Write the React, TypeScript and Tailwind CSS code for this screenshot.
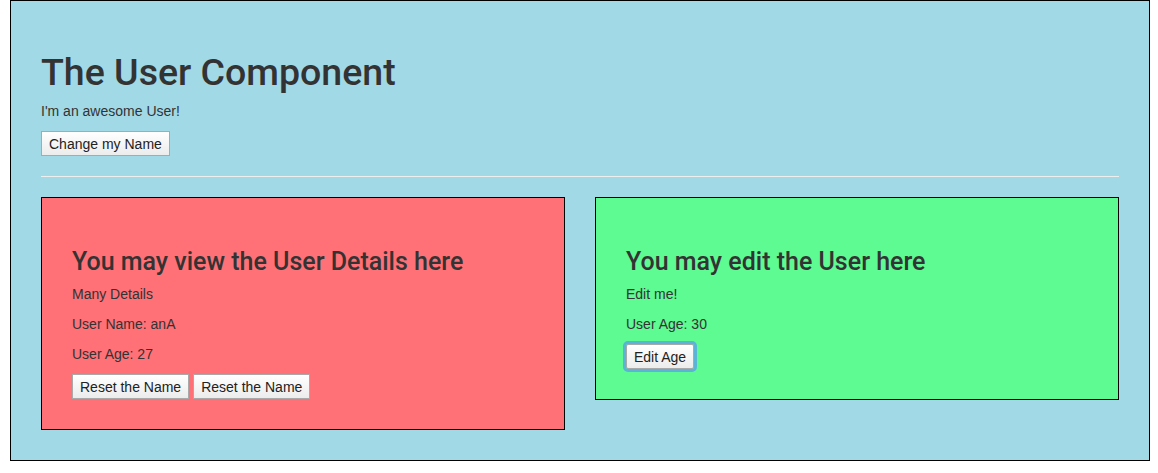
const Btn = ({ label, focused }: { label: string; focused?: boolean }) => (
  <button
    className={
      "h-[25px] px-[7px] text-[14px] leading-none text-[#222] border border-[#a9a9a9] bg-gradient-to-b from-white to-[#ececec] " +
      (focused ? "outline-[3px] outline-solid outline-[#5ab4d8] rounded-[2px]" : "")
    }
  >
    {label}
  </button>
);

const App = () => {
  return (
    <div className="w-[1158px] h-[473px] bg-white font-['Liberation_Sans',Arial,sans-serif] text-[#333] text-[14px] leading-[20px]">
      <div className="ml-[10px] w-[1140px] h-[461px] border border-black bg-[#a1d9e6] p-[30px]">
        <h1 className="mt-[21px] mb-[9px] font-['Roboto',sans-serif] font-medium text-[37.5px] leading-[40px]">
          The User Component
        </h1>
        <p className="mb-[10px]">I'm an awesome User!</p>
        <Btn label="Change my Name" />
        <hr className="my-[20px] border-t border-[#eeeeee]" />
        <div className="flex items-start gap-[30px]">
          <div className="flex-1 border border-black bg-[#ff7177] p-[30px]">
            <h3 className="mt-[21px] mb-[9px] font-['Roboto',sans-serif] font-medium text-[25px] leading-[26px]">
              You may view the User Details here
            </h3>
            <p className="mb-[10px]">Many Details</p>
            <p className="mb-[10px]">User Name: anA</p>
            <p className="mb-[10px]">User Age: 27</p>
            <div className="flex gap-[4px]">
              <Btn label="Reset the Name" />
              <Btn label="Reset the Name" />
            </div>
          </div>
          <div className="flex-1 border border-black bg-[#5efa92] p-[30px]">
            <h3 className="mt-[21px] mb-[9px] font-['Roboto',sans-serif] font-medium text-[25px] leading-[26px]">
              You may edit the User here
            </h3>
            <p className="mb-[10px]">Edit me!</p>
            <p className="mb-[10px]">User Age: 30</p>
            <Btn label="Edit Age" focused />
          </div>
        </div>
      </div>
    </div>
  );
};

export default App;
